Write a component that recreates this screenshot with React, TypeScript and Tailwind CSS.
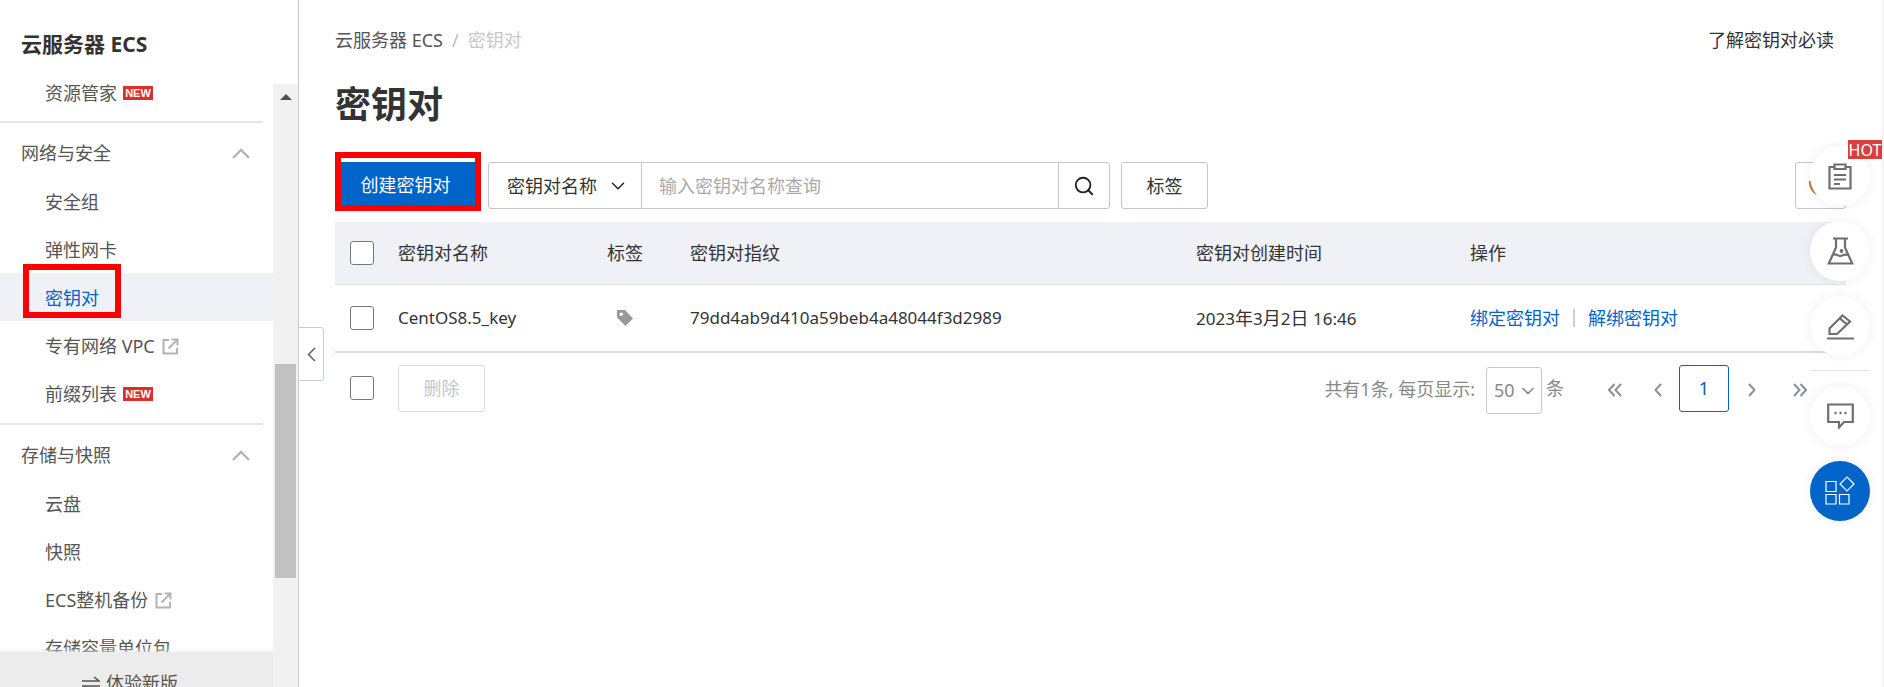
import { ChevronDown, Search } from "lucide-react";

const fontStack = "font-['Noto_Sans','Noto_Sans_CJK_SC',sans-serif]";

function NewBadge() {
  return (
    <span className="ml-[6px] flex h-[14px] w-[30px] items-center justify-center bg-[#dd2f2a] font-['Liberation_Sans',sans-serif] text-[11px] font-bold leading-none text-white">
      NEW
    </span>
  );
}

function ExternalIcon() {
  return (
    <svg width="17" height="17" viewBox="0 0 17 17" fill="none" stroke="#b4b4b4" strokeWidth="2" className="ml-[7px]">
      <path d="M7 2H1.500v13.500H15V10" />
      <path d="M6.500 10.500 14.500 2.500M9.500 1.500h6v6" />
    </svg>
  );
}

function NavRow({ label, active, badge, external }: { label: string; active?: boolean; badge?: boolean; external?: boolean }) {
  return (
    <div className={`relative flex h-[48px] items-center pl-[45px] pt-[2px] text-[18px] ${active ? "bg-[#eff1f6] text-[#0064c8]" : "text-[#555]"}`}>
      <span>{label}</span>
      {badge && <NewBadge />}
      {external && <ExternalIcon />}
      {active && <div className="absolute left-[23px] top-[-9px] h-[54px] w-[98px] border-[6px] border-[#f00]" />}
    </div>
  );
}

function SectionHeader({ label }: { label: string }) {
  return (
    <div className="flex h-[48px] items-center justify-between pl-[21px] pr-[23px] text-[18px] text-[#555]">
      <span>{label}</span>
      <svg width="18" height="11" viewBox="0 0 18 11" fill="none" stroke="#b4b4b4" strokeWidth="2.400">
        <path d="M1 10 9 2l8 8" />
      </svg>
    </div>
  );
}

function Checkbox() {
  return <div className="h-[24px] w-[24px] rounded-[3px] border border-[#777] bg-white" />;
}

function Sidebar() {
  return (
    <aside className="relative flex h-full w-[299px] shrink-0 flex-col border-r border-[#c8c8cc] bg-white">
      <div className="flex h-[84px] shrink-0 items-start pl-[21px] pt-[29px] text-[21px] font-bold leading-[30px] text-[#333]">
        云服务器 ECS
      </div>
      <div className="relative flex min-h-0 flex-1">
        <nav className="w-[273px] overflow-hidden">
          <div className="mt-[-16px]">
            <NavRow label="资源管家" badge />
            <div className="mb-[6px] mt-[5px] h-[2px] w-[263px] bg-[#e5e5e5]" />
            <SectionHeader label="网络与安全" />
            <NavRow label="安全组" />
            <NavRow label="弹性网卡" />
            <NavRow label="密钥对" active />
            <NavRow label="专有网络 VPC" external />
            <NavRow label="前缀列表" badge />
            <div className="mb-[6px] mt-[6px] h-[2px] w-[263px] bg-[#e5e5e5]" />
            <SectionHeader label="存储与快照" />
            <NavRow label="云盘" />
            <NavRow label="快照" />
            <NavRow label="ECS整机备份" external />
            <NavRow label="存储容量单位包" />
          </div>
        </nav>
        <div className="w-[25px] bg-[#f1f1f1] px-[2px]">
          <div className="flex h-[26px] items-center justify-center">
            <div className="h-0 w-0 border-x-[6px] border-b-[6px] border-x-transparent border-b-[#505050]" />
          </div>
          <div className="mt-[254px] h-[214px] bg-[#c1c1c1]" />
        </div>
        <div className="absolute bottom-0 left-0 w-[273px]">
          <div className="h-[6px] bg-gradient-to-b from-[#ffffff00] to-[#ececec80]" />
          <div className="flex h-[35px] items-start bg-[#ececec] pl-[82px] pt-[18px] text-[18px] leading-[26px] text-[#555]">
            <svg width="18" height="14" viewBox="0 0 18 14" fill="none" stroke="#555" strokeWidth="1.600" className="mr-[6px] mt-[6px]">
              <path d="M0 5h17L12 1M18 10H1l5 4" />
            </svg>
            体验新版
          </div>
        </div>
      </div>
      <div className="absolute left-[298px] top-[327px] flex h-[54px] w-[26px] items-center justify-center rounded-r-[3px] border border-[#c8cdd6] bg-white">
        <svg width="9" height="15" viewBox="0 0 9 15" fill="none" stroke="#56677d" strokeWidth="1.500">
          <path d="M8 1 1.500 7.500 8 14" />
        </svg>
      </div>
    </aside>
  );
}

function Toolbar() {
  return (
    <div className="mt-[32px] flex h-[47px] text-[18px] text-[#333]">
      <div className="relative mr-[7px] flex w-[146px] items-center justify-center bg-[#0064c8] pr-[5px] text-white">
        <span>创建密钥对</span>
        <div className="absolute left-0 top-[-10px] h-[59px] w-[146px] border-[6px] border-[#f00]" />
      </div>
      <div className="flex w-[154px] items-center rounded-l-[3px] border border-[#c4c6cc] pl-[18px] pt-[1px]">
        <span>密钥对名称</span>
        <ChevronDown size={22} strokeWidth={1.600} className="ml-[10px] text-[#222]" />
      </div>
      <div className="-ml-px flex w-[418px] items-center border border-[#c4c6cc] pl-[17px] pt-[1px] text-[#aaa]">输入密钥对名称查询</div>
      <div className="-ml-px flex w-[52px] items-center justify-center rounded-r-[3px] border border-[#c4c6cc]">
        <Search size={22} strokeWidth={2} className="text-[#222]" />
      </div>
      <div className="ml-[11px] flex w-[87px] items-center justify-center rounded-[3px] border border-[#c4c6cc] pt-[1px]">标签</div>
      <div className="ml-auto flex w-[51px] items-start rounded-[3px] border border-[#c4c6cc] pl-[13px] pt-[18px]">
        <svg width="8" height="14" viewBox="0 0 8 14" fill="none" stroke="#c8792f" strokeWidth="2.400">
          <path d="M1 0c0 5 2 10 7 13" />
        </svg>
      </div>
    </div>
  );
}

const tableCols = "grid grid-cols-[63px_209px_83px_506px_274px_1fr] items-center";

function KeyTable() {
  return (
    <div className="mt-[13px] text-[18px] text-[#333]">
      <div className={`${tableCols} h-[63px] border-b border-[#dfe3ea] bg-[#eff1f6]`}>
        <div className="pl-[15px]"><Checkbox /></div>
        <div>密钥对名称</div>
        <div>标签</div>
        <div>密钥对指纹</div>
        <div>密钥对创建时间</div>
        <div>操作</div>
      </div>
      <div className={`${tableCols} h-[68px] border-b-2 border-[#dcdcdc]`}>
        <div className="pl-[15px]"><Checkbox /></div>
        <div className="text-[17px]">CentOS8.5_key</div>
        <div className="pl-[9px]">
          <svg width="18" height="18" viewBox="0 0 18 18" fill="#999">
            <path fillRule="evenodd" d="M1 1h8l8 8.500-7.500 7.500L1 8.500zM5.200 3.400a1.800 1.800 0 1 0 0 3.600 1.800 1.800 0 0 0 0-3.600z" />
          </svg>
        </div>
        <div className="text-[17px]">79dd4ab9d410a59beb4a48044f3d2989</div>
        <div>
          <span className="text-[17px]">2023</span>年<span className="text-[17px]">3</span>月<span className="text-[17px]">2</span>日 <span className="text-[17px]">16:46</span>
        </div>
        <div className="flex items-center text-[#0064c8]">
          <span>绑定密钥对</span>
          <span className="mx-[13px] h-[18px] w-[2px] bg-[#cfcfcf]" />
          <span>解绑密钥对</span>
        </div>
      </div>
    </div>
  );
}

function Pager() {
  return (
    <div className="flex items-start text-[18px] text-[#888]">
      <span className="mt-[11px] leading-[26px]">共有1条, 每页显示:</span>
      <div className="ml-[11px] mt-[2px] flex h-[47px] w-[56px] items-center rounded-[3px] border border-[#c8c8c8] pl-[7px] pr-[3px]">
        <span>50</span>
        <ChevronDown size={20} strokeWidth={2} className="ml-auto text-[#888]" />
      </div>
      <span className="ml-[4px] mt-[10px] leading-[26px]">条</span>
      <svg width="14" height="14" viewBox="0 0 14 14" fill="none" stroke="#8a8f99" strokeWidth="2" className="ml-[44px] mt-[18px]">
        <path d="M6.500 1 1 7l5.500 6M13 1 7.500 7l5.500 6" />
      </svg>
      <svg width="8" height="14" viewBox="0 0 8 14" fill="none" stroke="#8a8f99" strokeWidth="2" className="ml-[32px] mt-[18px]">
        <path d="M7 1 1.500 7 7 13" />
      </svg>
      <div className="ml-[17px] flex h-[47px] w-[50px] items-center justify-center rounded-[3px] border border-[#0064c8] text-[#0064c8]">1</div>
      <svg width="8" height="14" viewBox="0 0 8 14" fill="none" stroke="#8a8f99" strokeWidth="2" className="ml-[19px] mt-[18px]">
        <path d="m1 1 5.500 6L1 13" />
      </svg>
      <svg width="14" height="14" viewBox="0 0 14 14" fill="none" stroke="#8a8f99" strokeWidth="2" className="ml-[37px] mt-[18px]">
        <path d="m1 1 5.500 6L1 13M7.500 1 13 7l-5.500 6" />
      </svg>
      <span className="w-[39px]" />
    </div>
  );
}

function FloatCircle({ children, blue }: { children: React.ReactNode; blue?: boolean }) {
  return (
    <div className={`relative flex h-[60px] w-[60px] items-center justify-center rounded-full shadow-[0_0_12px_rgba(0,0,0,0.07)] ${blue ? "bg-[#0064c8]" : "bg-white"}`}>
      {children}
    </div>
  );
}

function FloatTools() {
  return (
    <div className="absolute left-[1810px] top-[146px] flex w-[60px] flex-col">
      <FloatCircle>
        <svg width="24" height="27" viewBox="0 0 24 27" fill="none" stroke="#6f6f6f" strokeWidth="2.200">
          <path d="M6 4H1.500v21.500h21V4H18" />
          <path d="M6.500 1.500h11v4.500h-11z" />
          <path d="M6 12h12M6 16.500h12M6 21h6" />
        </svg>
        <span className="absolute left-[38px] top-[-6px] flex h-[19px] w-[34px] items-center justify-center bg-[#d93f3f] text-[16px] leading-none text-white">HOT</span>
      </FloatCircle>
      <div className="mt-[15px]">
        <FloatCircle>
          <svg width="27" height="28" viewBox="0 0 27 28" fill="none" stroke="#6f6f6f" strokeWidth="2.200">
            <path d="M6 1.500h15M9 1.500v9L1.800 26.500h23.400L18 10.500v-9" />
            <path d="M5.500 18c4-2 6 1.500 8 1s4-2 7.500-1" />
            <circle cx="14.500" cy="14" r="0.800" fill="#6f6f6f" />
          </svg>
        </FloatCircle>
      </div>
      <div className="mt-[15px]">
        <FloatCircle>
          <svg width="27" height="27" viewBox="0 0 27 27" fill="none" stroke="#6f6f6f" strokeWidth="2.200">
            <path d="M2.500 21v-5.500L15.500 2.500l7.500 6L10 21z" />
            <path d="m13 5.500 7 6M0 25.500h27" />
          </svg>
        </FloatCircle>
      </div>
      <div className="mb-[15px] mt-[14px] h-px w-[60px] bg-[#e5e5e5]" />
      <FloatCircle>
        <svg width="27" height="26" viewBox="0 0 27 26" fill="none" stroke="#6f6f6f" strokeWidth="2.200">
          <path d="M1.200 1.500h24.600v17.500H17l-5 5.500v-5.500H1.200z" />
          <path d="M7.500 10h2M12.500 10h2M17.500 10h2" strokeWidth="2.400" />
        </svg>
      </FloatCircle>
      <div className="mt-[15px]">
        <FloatCircle blue>
          <svg width="30" height="30" viewBox="0 0 30 30" fill="none" stroke="#fff" strokeWidth="1.200">
            <path d="M1 5.500h10v10H1zM1 18.500h10v9.500H1zM14.500 18.500H24v9.500h-9.500z" />
            <path d="m22 1 7 7-7 7-7-7z" />
          </svg>
        </FloatCircle>
      </div>
    </div>
  );
}

export default function App() {
  return (
    <div className={`relative flex h-[687px] w-[1884px] overflow-hidden bg-white ${fontStack}`}>
      <Sidebar />
      <main className="min-w-0 flex-1 pl-[36px] pr-[36px]">
        <div className="mt-[27px] flex h-[26px] items-center justify-between text-[18px]">
          <div className="flex items-center text-[#555]">
            <span>云服务器 ECS</span>
            <span className="mx-[9px] text-[#bbb]">/</span>
            <span className="text-[#c8c8c8]">密钥对</span>
          </div>
          <span className="mr-[12px] text-[#333]">了解密钥对必读</span>
        </div>
        <h1 className="mt-[27px] h-[50px] text-[36px] font-bold leading-[50px] text-[#333]">密钥对</h1>
        <Toolbar />
        <KeyTable />
        <div className="mt-[12px] flex items-start">
          <div className="w-[63px] pl-[15px] pt-[11px]"><Checkbox /></div>
          <div className="flex h-[47px] w-[87px] items-center justify-center rounded-[3px] border border-[#dcdcdc] text-[18px] text-[#c8c8c8]">删除</div>
          <div className="ml-auto"><Pager /></div>
        </div>
      </main>
      <div className="w-[2px] shrink-0 bg-[#f3f3f3]" />
      <FloatTools />
    </div>
  );
}
